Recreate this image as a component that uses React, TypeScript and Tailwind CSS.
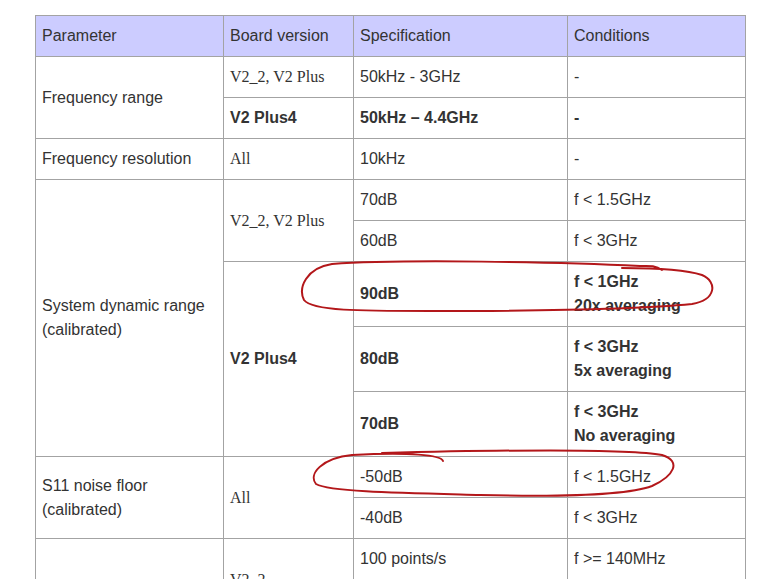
import React from 'react';

const cell = 'border border-[#a3a3a3] px-[6px] py-2 align-middle leading-6';
const serif = { fontFamily: '"Liberation Serif", "Times New Roman", serif' };

export default function App() {
  return (
    <div
      className="relative h-[579px] w-[784px] overflow-hidden bg-white pl-[35px] pt-[15px] text-[16px] text-[#333]"
      style={{ fontFamily: '"Liberation Sans", Arial, sans-serif' }}
    >
      <table className="w-[710px] table-fixed border-collapse">
        <colgroup>
          <col className="w-[188px]" />
          <col className="w-[130px]" />
          <col className="w-[214px]" />
          <col className="w-[178px]" />
        </colgroup>
        <thead>
          <tr className="bg-[#ccccff] text-left">
            <th className={`${cell} font-normal`}>Parameter</th>
            <th className={`${cell} font-normal`}>Board version</th>
            <th className={`${cell} font-normal`}>Specification</th>
            <th className={`${cell} font-normal`}>Conditions</th>
          </tr>
        </thead>
        <tbody>
          <tr>
            <td className={cell} rowSpan={2}>Frequency range</td>
            <td className={cell} style={serif}>V2_2, V2 Plus</td>
            <td className={cell}>50kHz - 3GHz</td>
            <td className={cell}>-</td>
          </tr>
          <tr className="font-bold">
            <td className={cell}>V2 Plus4</td>
            <td className={cell}>50kHz – 4.4GHz</td>
            <td className={cell}>-</td>
          </tr>
          <tr>
            <td className={cell}>Frequency resolution</td>
            <td className={cell} style={serif}>All</td>
            <td className={cell}>10kHz</td>
            <td className={cell}>-</td>
          </tr>
          <tr>
            <td className={cell} rowSpan={5}>System dynamic range<br />(calibrated)</td>
            <td className={cell} rowSpan={2} style={serif}>V2_2, V2 Plus</td>
            <td className={cell}>70dB</td>
            <td className={cell}>f &lt; 1.5GHz</td>
          </tr>
          <tr>
            <td className={cell}>60dB</td>
            <td className={cell}>f &lt; 3GHz</td>
          </tr>
          <tr className="font-bold">
            <td className={cell} rowSpan={3}>V2 Plus4</td>
            <td className={cell}>90dB</td>
            <td className={cell}>f &lt; 1GHz<br />20x averaging</td>
          </tr>
          <tr className="font-bold">
            <td className={cell}>80dB</td>
            <td className={cell}>f &lt; 3GHz<br />5x averaging</td>
          </tr>
          <tr className="font-bold">
            <td className={cell}>70dB</td>
            <td className={cell}>f &lt; 3GHz<br />No averaging</td>
          </tr>
          <tr>
            <td className={cell} rowSpan={2}>S11 noise floor<br />(calibrated)</td>
            <td className={cell} rowSpan={2} style={serif}>All</td>
            <td className={cell}>-50dB</td>
            <td className={cell}>f &lt; 1.5GHz</td>
          </tr>
          <tr>
            <td className={cell}>-40dB</td>
            <td className={cell}>f &lt; 3GHz</td>
          </tr>
          <tr>
            <td className={cell} rowSpan={4}>Sweep rate</td>
            <td className={cell} rowSpan={2} style={serif}>V2_2</td>
            <td className={cell}>100 points/s</td>
            <td className={cell}>f &gt;= 140MHz</td>
          </tr>
          <tr>
            <td className={cell}>50 points/s</td>
            <td className={cell}>f &lt; 140MHz</td>
          </tr>
          <tr>
            <td className={cell} rowSpan={2} style={serif}>V2 Plus4</td>
            <td className={cell}>400 points/s</td>
            <td className={cell}>-</td>
          </tr>
          <tr>
            <td className={cell}>200 points/s</td>
            <td className={cell}>-</td>
          </tr>
        </tbody>
      </table>

      {/* hand-drawn red marks */}
      <svg className="pointer-events-none absolute left-0 top-0" width="784" height="579" fill="none">
        <path
          d="M 662 270 C 655 265, 648 266, 640 266 C 560 262, 400 259, 332 264 C 306 268, 298 288, 304 300 C 312 311, 360 311, 430 311 C 530 311, 640 309, 692 304 C 716 300, 718 282, 702 275 C 684 269, 650 268, 622 268"
          stroke="#b3171a"
          strokeWidth="2"
          strokeLinecap="round"
        />
        <path
          d="M 443 461 C 441 455, 410 452, 352 455 C 322 458, 308 474, 316 484 C 330 492, 400 493, 480 495 C 560 497, 628 495, 652 486 C 674 476, 682 461, 662 455 C 626 448, 500 450, 382 453"
          stroke="#b3171a"
          strokeWidth="2"
          strokeLinecap="round"
        />
      </svg>
    </div>
  );
}
